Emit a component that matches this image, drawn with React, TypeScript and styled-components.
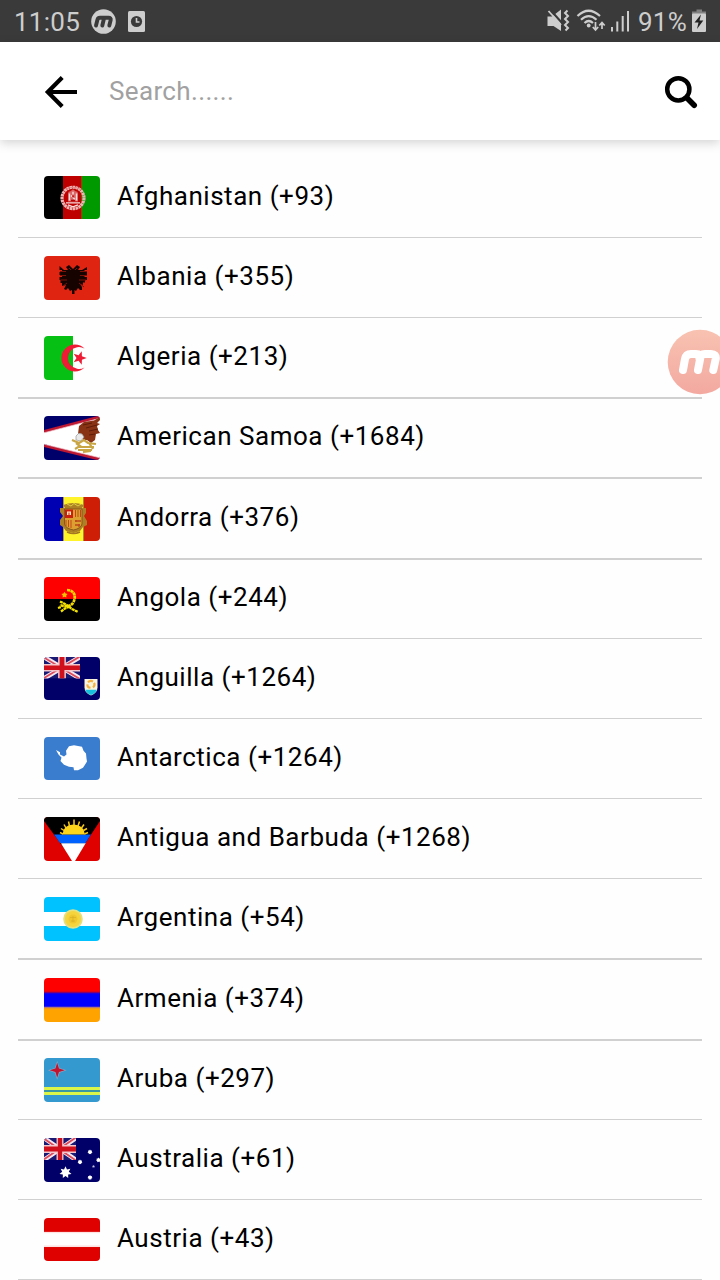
import React from "react";
import styled, { createGlobalStyle } from "styled-components";

const GlobalStyle = createGlobalStyle`
  * { box-sizing: border-box; }
  html, body { margin: 0; padding: 0; background: #fefefe; overflow: hidden; }
  body { font-family: Roboto, "Liberation Sans", sans-serif; color: #000; }
`;

const Screen = styled.div`
  width: 720px;
  height: 1280px;
  overflow: hidden;
  background: #fefefe;
  display: flex;
  flex-direction: column;
`;

const StatusBar = styled.div`
  height: 42px;
  flex: none;
  display: flex;
  align-items: center;
  justify-content: space-between;
  padding: 0 13px 0 14px;
  background: #3a3a3a;
  color: #cdcdcd;
`;

const StatusGroup = styled.div`
  display: flex;
  align-items: center;
  height: 42px;
`;

const StatusText = styled.span<{ $width: number }>`
  width: ${(p) => p.$width}px;
  font-size: 26px;
  line-height: 42px;
  padding-top: 2px;
  letter-spacing: 0.25px;
  white-space: nowrap;
`;

const Header = styled.header`
  height: 98px;
  flex: none;
  display: flex;
  align-items: center;
  padding: 2px 22px 0 44px;
  background: #fff;
  box-shadow: 0 3px 10px rgba(0, 0, 0, 0.17);
  z-index: 1;
`;

const SearchField = styled.div`
  flex: 1;
  padding: 0 0 2px 31px;
  font-size: 26px;
  line-height: 34px;
  letter-spacing: 0.35px;
  color: #a1a1a1;
`;

const List = styled.ul`
  list-style: none;
  margin: 0;
  padding: 18px 18px 0;
`;

const Row = styled.li<{ $height: number; $top: number; $line: number }>`
  display: flex;
  align-items: flex-start;
  height: ${(p) => p.$height}px;
  padding: ${(p) => p.$top}px 26px 0;
  border-bottom: ${(p) => p.$line}px solid #d0d0d0;
`;

const FlagBox = styled.div<{ $height: number }>`
  width: 56px;
  height: ${(p) => p.$height}px;
  border-radius: 4px;
  overflow: hidden;
  svg { display: block; }
`;

const Name = styled.span`
  margin-left: 17px;
  font-size: 26px;
  line-height: 40px;
  letter-spacing: 0.53px;
  white-space: nowrap;
`;

const FloatingButton = styled.div`
  position: absolute;
  left: 667px;
  top: 329px;
  width: 53px;
  height: 66px;
  overflow: hidden;
  z-index: 2;
  svg { display: block; }
`;

const UnionJack = ({ w, h }: { w: number; h: number }) => (
  <svg width={w} height={h} viewBox="0 0 36 22" preserveAspectRatio="none">
    <rect width="36" height="22" fill="#1a1a74" />
    <path d="M0 0L36 22M36 0L0 22" stroke="#f3e6ee" strokeWidth="4.6" />
    <path d="M0 0.6L36 22.6M36 -0.6L0 21.4" stroke="#dc4a5c" strokeWidth="1.8" />
    <path d="M18 0V22M0 11H36" stroke="#f3c6cc" strokeWidth="7.8" />
    <path d="M18 0V22M0 11H36" stroke="#d0101c" strokeWidth="4.800" />
  </svg>
);

const starPoints = (cx: number, cy: number, outer: number, inner: number, n: number, rot = -90) =>
  Array.from({ length: n * 2 }, (_, i) => {
    const r = i % 2 ? inner : outer;
    const a = ((rot + (i * 180) / n) * Math.PI) / 180;
    return `${(cx + r * Math.cos(a)).toFixed(2)},${(cy + r * Math.sin(a)).toFixed(2)}`;
  }).join(" ");

const flags: Record<string, React.ReactNode> = {
  af: (
    <>
      <rect width="19" height="44" fill="#000" />
      <rect x="19" width="19" height="44" fill="#be0000" />
      <rect x="38" width="18" height="44" fill="#009900" />
      <path d="M37.700 0V44" stroke="#7a5a00" strokeWidth="1" />
      <circle cx="29" cy="22.500" r="11" fill="none" stroke="#eeb4b4" strokeWidth="3.200" strokeDasharray="2.500 .5" />
      <path d="M22 13.500Q29 9.500 36 13.500" fill="none" stroke="#e28c8c" strokeWidth="1.200" />
      <path d="M24 18Q24 15.500 26.500 15.500L29 13.500L31.500 15.500Q34 15.500 34 18V26H24Z" fill="#d96565" />
      <path d="M22 27.500H36M24 29.500L29 31.500L34 29.500M25.500 18V25M32.500 18V25M27 20L31 24M29 16V19" stroke="#f8dede" strokeWidth="1.400" fill="none" />
      <path d="M29 20V22M27 25H31" stroke="#b80000" strokeWidth="1.500" />
    </>
  ),
  al: (
    <>
      <rect width="56" height="44" fill="#df2412" />
      <path d="M22 11L25 9L29 13L33 9L36 11L34 14L38 14L43 11V14H40.500V16H43V19H40.500V21H43V24H41V26.500H39V29L36 28L38 31V34H36L34 32L32 35L30.500 34V38H28V34L26 35L24 32L22 34L20 33L22 29L18 30V27H16.500V24H15.500V21H18V19H15.500V16H18V14H15.500V10L20 14H24Z" fill="#160300" />
      <path d="M16 15.500H22M16 19.500H22M36 15.500H43M36 19.500H43M17 24H23M35 24H42M25 12L27 14M33 12L31 14M19 30L23 27M40 31L35 27" stroke="#7c1208" strokeWidth="1" />
    </>
  ),
  dz: (
    <>
      <rect width="56" height="44" fill="#fefefe" />
      <rect width="29" height="44" fill="#06c113" />
      <path d="M40.500 12.500A13.500 13.500 0 1 0 40.500 31.500A11 11 0 1 1 40.500 12.500Z" fill="#ee1c35" />
      <polygon points={starPoints(35.5, 22, 7.2, 3, 5, 0)} fill="#ee1c35" />
    </>
  ),
  as: (
    <>
      <rect width="56" height="44" fill="#00006b" />
      <path d="M0 16L56 0V44L0 28Z" fill="#fff" />
      <path d="M0 15.500L56 0.800M0 29.500L56 43.300" stroke="#bd1731" strokeWidth="2.800" />
      <path d="M0 16.800L56 2.300M0 28.200L56 41.800" stroke="#f4c7ce" strokeWidth=".7" />
      <path d="M35 10L40 6L50 4.500L56 1V4L53 7L56 8L53 10L54 14L56 17L52 18L51 24L47 27L43 24L39 24L38 20L34 18Z" fill="#883313" />
      <path d="M39 9L48 7M42 12L53 9M45 15L54 13M45 19L51 18" stroke="#5f1c09" strokeWidth="1" />
      <path d="M32 20Q34 16 38 18L40 21L37 25L32 24Z" fill="#e9e9e9" stroke="#9a9a9a" strokeWidth=".7" />
      <path d="M28 24L35 27L40 24L44 27L52 28M32 27L36 30L31 33M36 31L50 31M34 34L48 34M39 36L47 35M45 27L49 33" fill="none" stroke="#c8a545" strokeWidth="2.200" />
    </>
  ),
  ad: (
    <>
      <rect width="19" height="44" fill="#0000b2" />
      <rect x="19" width="20.500" height="44" fill="#fff32b" />
      <rect x="39.500" width="16.500" height="44" fill="#ce1e05" />
      <path d="M19.500 0V44M39.500 0V44" stroke="#a38d2e" strokeWidth=".9" />
      <path d="M19 8Q29.500 4 40 8L38 11H42V16L40 19L43 24V28L39 30L36 34L29.500 36L22 34L19 30L16 28V23L19 19L16 15V11H21Z" fill="#ae8025" />
      <path d="M23 7L27 9L30 6.500L34 9L37 7" stroke="#ddcf41" strokeWidth="1" fill="none" />
      <path d="M20.500 12H38V27Q37 31.500 29.500 33Q21.500 31.500 20.500 27Z" fill="#dba02f" stroke="#7b4a19" strokeWidth=".8" />
      <rect x="21" y="12.500" width="8" height="8.500" fill="#c9200e" />
      <path d="M23 14.500H27V18H25.500V15.500H24.500V18H23Z" fill="#ffe9bd" />
      <path d="M31.500 13V20M34 13V20M36.500 13V20M22 23V29M24.500 23V30M27 23V31" stroke="#c6461b" strokeWidth="1" />
      <path d="M31 24H37M31 28H36M32 23V25M35 27V30" stroke="#bb471b" strokeWidth="1.300" />
      <path d="M23 35Q29.500 38 36 35" stroke="#a67722" strokeWidth="1.600" fill="none" />
    </>
  ),
  ao: (
    <>
      <rect width="56" height="22" fill="#f00" />
      <rect y="22" width="56" height="22" fill="#000" />
      <path d="M23 13C30 13 32.500 19 29.500 25C27 30 20.500 30 16 28" fill="none" stroke="#f4d900" strokeWidth="2.700" strokeDasharray="3 .5" />
      <path d="M16 24.500L22 27.500L28 32L34 35M14 31L17 30M17 34.500L21 31.500L26 29.500" fill="none" stroke="#f4e400" strokeWidth="2.300" strokeDasharray="3 .5" />
      <polygon points={starPoints(20.5, 18, 3.2, 1.8, 5)} fill="#ffbd00" />
    </>
  ),
  ai: (
    <>
      <rect width="56" height="44" fill="#000068" />
      <UnionJack w={36} h={22} />
      <path d="M40.500 22.500H53.500V31Q53.500 37 47 39.500Q40.500 37 40.500 31Z" fill="#f9f4dd" />
      <path d="M41.200 33.500H52.800Q51.500 37.500 47 38.800Q42.500 37.500 41.200 33.500Z" fill="#19c2dc" />
      <path d="M44 26Q46 23.500 49 25M50 26.500Q51.500 29 49 31M46.500 31.500Q43 31 43.500 28" fill="none" stroke="#f5b045" strokeWidth="2.200" />
    </>
  ),
  aq: (
    <>
      <rect width="56" height="44" fill="#3a7dce" />
      <path d="M12 13.300L16 15.500V18L20 20L22.500 18L22 14L25 9.500L30 8.500L38 10L39.500 14L42 17L42.500 22L43 25L41 28.500L39 31.500L34 34H30L29.500 31L25 30.500L20 28.500L16.500 24.500L17.500 21L14.500 18Z" fill="#fff" />
    </>
  ),
  ag: (
    <>
      <rect width="56" height="44" fill="#df0000" />
      <path d="M0 0H56V4L29.500 44L0 4Z" fill="#000" />
      <path d="M10 17.500H47L41.500 26H16Z" fill="#0061ff" />
      <path d="M17 26.500H41.500L31 44H28Z" fill="#fff" />
      <path d="M18.500 17.500Q19 8 29.500 7.500Q40 8 41 17.500Z" fill="#ffd51b" />
      <path d="M19 17L16 15.500M20 13.500L17 11.500M22 11L20 7.500M25.500 9L24.500 4.500M30 8V2.500M34 9L35.500 4.500M37.500 11L40 7.500M39.500 13.500L43 11.500M40.500 17L44 15.500" stroke="#f5c81b" strokeWidth="1.500" />
      <path d="M17.500 26.500H41.500" stroke="#b2d4ff" strokeWidth=".8" />
    </>
  ),
  ar: (
    <>
      <rect width="56" height="44" fill="#00c2ff" />
      <rect y="15" width="56" height="14" fill="#fff" />
      <circle cx="29" cy="22" r="9.800" fill="#e3e184" />
      <circle cx="29" cy="22" r="8" fill="#f5d43d" />
      <circle cx="29" cy="22" r="4.500" fill="#efc82f" />
      <path d="M26 20.500H32M27 24H31M29 19V25" stroke="#d8ad26" strokeWidth=".7" />
    </>
  ),
  am: (
    <>
      <rect width="56" height="15" fill="#f00" />
      <rect y="15" width="56" height="14" fill="#00f" />
      <rect y="29" width="56" height="15" fill="#ffa300" />
      <path d="M0 14.500H56" stroke="#83006f" strokeWidth="1.500" />
      <path d="M0 29.500H56" stroke="#b27874" strokeWidth="1.300" />
    </>
  ),
  aw: (
    <>
      <rect width="56" height="44" fill="#3399cf" />
      <path d="M0 30.500H56M0 35.500H56" stroke="#dbf548" strokeWidth="3" />
      <path d="M0 33H56" stroke="#3c9990" strokeWidth="1.700" />
      <polygon points={starPoints(13.2, 12.3, 9.5, 3.4, 4)} fill="#83a5c3" />
      <polygon points={starPoints(13.2, 12.3, 7.5, 2.5, 4)} fill="#c5122d" />
    </>
  ),
  au: (
    <>
      <rect width="56" height="44" fill="#000068" />
      <UnionJack w={32} h={22} />
      <polygon points={starPoints(21.5, 34.5, 6.2, 3.4, 7)} fill="#fff" />
      <polygon points={starPoints(46, 14, 2.5, 1.8, 7)} fill="#fff" />
      <polygon points={starPoints(36, 24, 2.4, 1.8, 7)} fill="#fff" />
      <polygon points={starPoints(54.5, 22, 2.4, 1.8, 7)} fill="#fff" />
      <polygon points={starPoints(46, 39.5, 2.5, 1.8, 7)} fill="#fff" />
      <polygon points={starPoints(49.5, 28.5, 1.6, 0.8, 5)} fill="#c0c0e0" />
    </>
  ),
  at: (
    <>
      <rect width="56" height="44" fill="#df0000" />
      <rect y="14.200" width="56" height="15.500" fill="#ffe4e4" />
      <rect y="15.500" width="56" height="12.500" fill="#fff" />
    </>
  ),
};

interface Country {
  code: string;
  label: string;
  height: number;
  top?: number;
  line?: number;
  flag?: number;
}

const countries: Country[] = [
  { code: "af", label: "Afghanistan (+93)", height: 80, flag: 43 },
  { code: "al", label: "Albania (+355)", height: 80 },
  { code: "dz", label: "Algeria (+213)", height: 81, line: 2 },
  { code: "as", label: "American Samoa (+1684)", height: 80, top: 17, line: 2 },
  { code: "ad", label: "Andorra (+376)", height: 81, line: 2 },
  { code: "ao", label: "Angola (+244)", height: 79, top: 17 },
  { code: "ai", label: "Anguilla (+1264)", height: 80, flag: 43 },
  { code: "aq", label: "Antarctica (+1264)", height: 80, flag: 43 },
  { code: "ag", label: "Antigua and Barbuda (+1268)", height: 80 },
  { code: "ar", label: "Argentina (+54)", height: 81, line: 2 },
  { code: "am", label: "Armenia (+374)", height: 81, line: 2 },
  { code: "aw", label: "Aruba (+297)", height: 79, top: 17 },
  { code: "au", label: "Australia (+61)", height: 80 },
  { code: "at", label: "Austria (+43)", height: 80, flag: 43 },
];

const NotificationIcons = () => (
  <svg width="56" height="42" viewBox="90 0 56 42">
    <circle cx="103.500" cy="21.500" r="12.300" fill="#cdcdcd" />
    <path d="M96 25.500L97.500 19.500Q98 17.800 100 17.800H108.500Q111.200 17.800 110.700 20L109.300 25.500M102.300 25.500L104 18.500" fill="none" stroke="#3a3a3a" strokeWidth="3.900" strokeLinejoin="round" strokeLinecap="round" />
    <rect x="128" y="11" width="17" height="21" rx="1.500" fill="#cdcdcd" />
    <circle cx="136.500" cy="21.500" r="5.600" fill="#3a3a3a" />
    <path d="M136.500 18V22H139.500" fill="none" stroke="#cdcdcd" strokeWidth="1.600" />
  </svg>
);

const SignalIcons = () => (
  <svg width="92" height="42" viewBox="546 0 92 42" fill="none" stroke="#cdcdcd">
    <path d="M547.500 16.500H552L561 9.500V31L553.500 26H547.500Z" fill="#cdcdcd" stroke="none" />
    <path d="M549.500 9L566 27.500" stroke="#3a3a3a" strokeWidth="2.200" />
    <path d="M548.500 11L561 25" strokeWidth="1.800" />
    <path d="M567.500 10.500L565 13L568 16L565 19L568 22L565 25L568 28L565.500 30.500" strokeWidth="2" />
    <path d="M577.500 16Q588.500 5.500 600 16M581 19.700Q588.700 12.500 596.500 19.700M584.500 23Q588.700 19 593 23" strokeWidth="2.200" />
    <circle cx="588.700" cy="25.500" r="1.900" fill="#cdcdcd" stroke="none" />
    <path d="M595.500 22V30M592.800 27L595.500 30L598.200 27M602 29V23M599.300 25.500L602 22.500L604.700 25.500" strokeWidth="1.700" />
    <path d="M612 27V31.500M617.300 21.500V31.500M622.700 16V31.500M628 11V31.500" strokeWidth="2" />
  </svg>
);

const BatteryIcon = () => (
  <svg width="15" height="42" viewBox="692 0 15 42">
    <path d="M696.500 9.500H702V11.500H706V15H692V11.500H696.500Z" fill="#808080" />
    <rect x="692" y="13.500" width="14" height="18.500" rx="1" fill="#cdcdcd" />
    <path d="M701 14.500L694.500 22.500H698.500L697 29L703.300 20.500H699.500Z" fill="#222" />
  </svg>
);

const BackIcon = () => (
  <svg width="34" height="36" viewBox="44 74 34 36" fill="none" stroke="#000" strokeWidth="4.200">
    <path d="M77 92H48M62.200 77.600L47.800 92L62.200 106.400" />
  </svg>
);

const SearchIcon = () => (
  <svg width="34" height="36" viewBox="664 74 34 36" fill="none" stroke="#000">
    <circle cx="678.300" cy="89.300" r="11.100" strokeWidth="4.500" />
    <path d="M687 98L694.200 105.200" strokeWidth="5.600" strokeLinecap="round" />
  </svg>
);

const RecorderIcon = () => (
  <svg width="53" height="66" viewBox="667 329 53 66">
    <defs>
      <linearGradient id="coral" x1="0" y1="0" x2="0" y2="1">
        <stop offset="0" stopColor="#f8c2b1" />
        <stop offset="1" stopColor="#f3a9a0" />
      </linearGradient>
    </defs>
    <circle cx="700" cy="362" r="32.300" fill="url(#coral)" />
    <path d="M683 370L685 359Q686 354 691 354H696Q701 354 700.300 358L698 370M699.500 358Q700.500 354 705 354H711Q716.500 354 715.700 359L713.300 370" fill="none" stroke="#fff" strokeWidth="8" strokeLinecap="round" strokeLinejoin="round" />
  </svg>
);

const Flag = ({ code, height }: { code: string; height: number }) => (
  <FlagBox $height={height}>
    <svg width="56" height={height} viewBox="0 0 56 44" preserveAspectRatio="none">
      {flags[code]}
    </svg>
  </FlagBox>
);

export default function App() {
  return (
    <Screen>
      <GlobalStyle />
      <StatusBar>
        <StatusGroup>
          <StatusText $width={76}>11:05</StatusText>
          <NotificationIcons />
        </StatusGroup>
        <StatusGroup>
          <SignalIcons />
          <StatusText $width={54}>91%</StatusText>
          <BatteryIcon />
        </StatusGroup>
      </StatusBar>
      <Header>
        <BackIcon />
        <SearchField>Search......</SearchField>
        <SearchIcon />
      </Header>
      <List>
        {countries.map(({ code, label, height, top = 18, line = 1, flag = 44 }) => (
          <Row key={code} $height={height} $top={top} $line={line}>
            <Flag code={code} height={flag} />
            <Name>{label}</Name>
          </Row>
        ))}
      </List>
      <FloatingButton>
        <RecorderIcon />
      </FloatingButton>
    </Screen>
  );
}
